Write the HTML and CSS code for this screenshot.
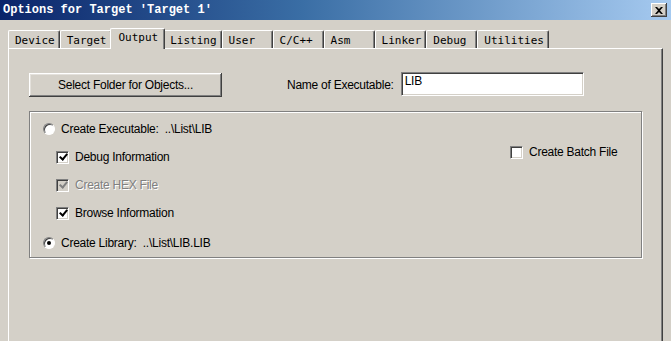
FILE: index.html
```html
<!DOCTYPE html>
<html lang="en">
<head>
    <meta charset="UTF-8">
    <title>Options for Target 'Target 1'</title>
    <link rel="stylesheet" href="styles.css">
</head>
<body>
    <div class="titlebar">
        <span class="title">Options for Target 'Target 1'</span>
        <span class="close">
            <svg width="8" height="7" viewBox="0 0 8 7"><path d="M0 0h2l2 2 2-2h2L5 3.5 8 7H6L4 5 2 7H0l3-3.5z" fill="#000"/></svg>
        </span>
    </div>

    <div class="tabs">
        <div class="tab">Device</div>
        <div class="tab">Target</div>
        <div class="tab active">Output</div>
        <div class="tab">Listing</div>
        <div class="tab">User</div>
        <div class="tab">C/C++</div>
        <div class="tab">Asm</div>
        <div class="tab">Linker</div>
        <div class="tab">Debug</div>
        <div class="tab">Utilities</div>
    </div>

    <div class="panel">
        <div class="top-row">
            <button class="btn">Select Folder for Objects...</button>
            <label class="exe-label" for="exeName">Name of Executable:</label>
            <input class="field" id="exeName" type="text" value="LIB">
        </div>

        <div class="group">
            <div class="options">
                <div class="row">
                    <span class="radio"></span>
                    <span class="radio-text">Create Executable:&nbsp; ..\List\LIB</span>
                </div>
                <div class="row sub">
                    <span class="check checked"></span>
                    <span class="check-text">Debug Information</span>
                </div>
                <div class="row sub disabled">
                    <span class="check checked"></span>
                    <span class="check-text">Create HEX File</span>
                </div>
                <div class="row sub">
                    <span class="check checked"></span>
                    <span class="check-text">Browse Information</span>
                </div>
                <div class="row last">
                    <span class="radio on"></span>
                    <span class="radio-text">Create Library:&nbsp; ..\List\LIB.LIB</span>
                </div>
            </div>
            <div class="batch">
                <span class="check"></span>
                <span class="check-text">Create Batch File</span>
            </div>
        </div>
    </div>
</body>
</html>
```

FILE: styles.css
```css
body {
    margin: 0;
    background-color: #d4d0c8;
    font-family: "Liberation Sans", Arial, sans-serif;
    font-size: 12px;
    letter-spacing: -0.25px;
    color: #000;
    overflow: hidden;
}
.titlebar {
    height: 20px;
    display: flex;
    align-items: center;
    justify-content: space-between;
    padding: 0 4px 0 3px;
    background: linear-gradient(to right, #0a246a 0%, #3a6ea5 45%, #a6caf0 100%);
}
.title {
    font-family: "Liberation Mono", monospace;
    font-weight: bold;
    font-size: 12px;
    letter-spacing: 0;
    color: #fff;
}
.close {
    width: 16px;
    height: 14px;
    box-sizing: border-box;
    background: #d4d0c8;
    box-shadow: inset -1px -1px #404040, inset 1px 1px #fff, inset -2px -2px #808080;
    display: flex;
    align-items: center;
    justify-content: center;
}
.tabs {
    display: flex;
    align-items: flex-end;
    height: 18px;
    margin-top: 10px;
    padding: 0 8px;
}
.tab {
    height: 18px;
    min-width: 51px;
    box-sizing: border-box;
    padding: 3px 4px 0 6px;
    border-top: 1px solid #fff;
    border-left: 1px solid #fff;
    border-right: 1px solid #404040;
    border-radius: 2px 2px 0 0;
    box-shadow: inset -1px 0 #808080;
    font-family: "DejaVu Sans Mono", monospace;
    font-size: 11px;
    letter-spacing: 0;
}
.tab.active {
    position: relative;
    z-index: 1;
    height: 21px;
    margin: 0 -2px -1px -2px;
    padding: 2px 6px 0 8px;
    background-color: #d4d0c8;
}
.panel {
    height: calc(100vh - 48px);
    box-sizing: border-box;
    margin: 0 8px;
    padding: 24px 0 0 20px;
    border-top: 1px solid #fff;
    border-left: 1px solid #fff;
    border-right: 1px solid #404040;
    box-shadow: inset -1px 0 #808080;
}
.top-row {
    display: flex;
    align-items: center;
}
.btn {
    width: 193px;
    height: 24px;
    border: none;
    padding: 0;
    background-color: #d4d0c8;
    box-shadow: inset -1px -1px #404040, inset 1px 1px #fff, inset -2px -2px #808080, inset 2px 2px #e4e1dc;
    font-family: inherit;
    font-size: 12px;
    letter-spacing: inherit;
    color: #000;
}
.exe-label {
    margin-left: 65px;
}
.field {
    width: 183px;
    height: 24px;
    box-sizing: border-box;
    margin-left: 7px;
    margin-top: -2px;
    padding: 0 3px 6px 3px;
    border: 1px solid;
    border-color: #808080 #fff #fff #808080;
    box-shadow: inset 1px 1px #404040, inset -1px -1px #d4d0c8;
    background: #fff;
    font-family: inherit;
    font-size: 12px;
    letter-spacing: inherit;
}
.group {
    display: flex;
    width: 613px;
    height: 147px;
    box-sizing: border-box;
    margin-top: 14px;
    padding: 3px 0 0 13px;
    border: 1px solid #808080;
    box-shadow: 1px 1px #fff, inset 1px 1px #fff;
}
.options {
    width: 468px;
}
.row {
    height: 28px;
    display: flex;
    align-items: center;
}
.row.sub {
    padding-left: 13px;
}
.row.last {
    margin-top: 2px;
}
.radio {
    width: 12px;
    height: 12px;
    box-sizing: border-box;
    border-radius: 50%;
    border: 1px solid;
    border-color: #808080 #fff #fff #808080;
    box-shadow: inset 1px 1px #404040;
    background: #fff;
    display: flex;
    align-items: center;
    justify-content: center;
}
.radio.on::after {
    content: "";
    width: 4px;
    height: 4px;
    border-radius: 50%;
    background: #000;
}
.radio-text {
    margin-left: 6px;
}
.check {
    width: 13px;
    height: 13px;
    box-sizing: border-box;
    border: 1px solid;
    border-color: #808080 #fff #fff #808080;
    box-shadow: inset 1px 1px #404040, inset -1px -1px #d4d0c8;
    background: #fff;
    display: flex;
    align-items: center;
    justify-content: center;
}
.check.checked::after {
    content: "";
    width: 3px;
    height: 6px;
    margin: -3px 0 0 1px;
    border: solid #000;
    border-width: 0 2px 2px 0;
    transform: rotate(40deg);
}
.check-text {
    margin-left: 6px;
}
.disabled .check {
    background: #d4d0c8;
}
.disabled .check.checked::after {
    border-color: #808080;
}
.disabled .check-text {
    color: #808080;
    text-shadow: 1px 1px #fff;
}
.batch {
    display: flex;
    align-items: center;
    height: 14px;
    margin-top: 30px;
    margin-left: -1px;
}
```
